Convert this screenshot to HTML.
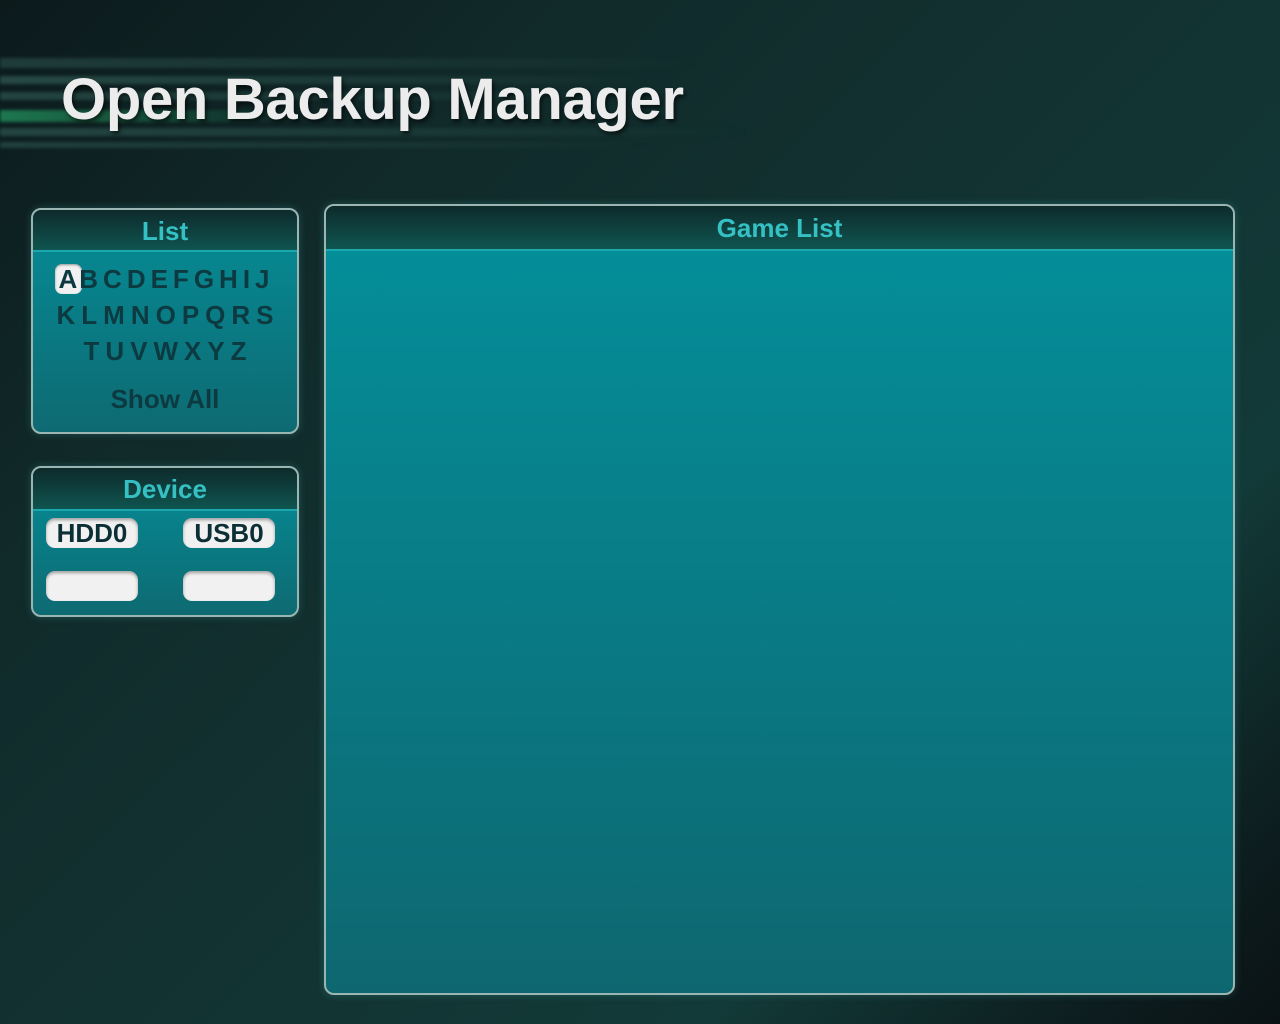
<!DOCTYPE html>
<html><head><style>
*{margin:0;padding:0;box-sizing:border-box}
body{width:1280px;height:1024px;overflow:hidden;position:relative;font-family:"Liberation Sans",sans-serif;
background:linear-gradient(135deg,#0c1a1c 0%,#112a2a 25%,#123433 55%,#123a38 75%,#0d1c1e 92%,#0a1214 100%);}
.stripe{position:absolute;left:0;height:8px;filter:blur(1.5px)}
.title{position:absolute;left:61px;top:66px;font-size:58px;font-weight:bold;color:#ececec;letter-spacing:-0.3px;text-shadow:2px 3px 4px rgba(0,0,0,.6);}
.panel{position:absolute;border:2px solid #9bb5b3;border-radius:10px;overflow:hidden;
background:linear-gradient(#058d97,#0e6a72);box-shadow:0 0 8px rgba(80,200,200,.25);}
.hd{background:linear-gradient(#0e2a2b,#0f5550);border-bottom:2px solid #1aa7ad;color:#35c0c4;font-weight:bold;text-align:center;font-size:26px;}
.row{position:absolute;left:0;width:100%;text-align:center;font-weight:bold;font-size:26px;color:#0c3a40;letter-spacing:6px;}
.btn{position:absolute;width:92px;height:30px;background:#f1f1f1;border-radius:9px;box-shadow:inset 0 2px 3px rgba(0,0,0,.35);color:#0c2f35;font-weight:bold;font-size:26px;text-align:center;line-height:30px;}
</style></head><body>
<div class="stripe" style="top:58px;width:700px;height:10px;background:linear-gradient(90deg,rgba(60,110,100,.4),rgba(60,110,100,0))"></div>
<div class="stripe" style="top:76px;width:650px;background:linear-gradient(90deg,rgba(70,130,115,.45),rgba(70,130,115,0))"></div>
<div class="stripe" style="top:92px;width:620px;background:linear-gradient(90deg,rgba(70,130,115,.4),rgba(70,130,115,0))"></div>
<div class="stripe" style="top:110px;width:300px;height:12px;background:linear-gradient(90deg,rgba(40,180,110,.6),rgba(40,160,110,0))"></div>
<div class="stripe" style="top:128px;width:750px;background:linear-gradient(90deg,rgba(70,130,115,.4),rgba(70,130,115,0))"></div>
<div class="stripe" style="top:142px;width:650px;height:6px;background:linear-gradient(90deg,rgba(70,130,115,.35),rgba(70,130,115,0))"></div>
<div class="title">Open Backup Manager</div>

<div class="panel" style="left:31px;top:208px;width:268px;height:226px">
 <div class="hd" style="height:42px;line-height:42px">List</div>
 <div class="row" style="top:54px;left:0px;letter-spacing:5px"><span style="background:#f1f1f1;border-radius:7px;padding:0 0 0 3px;margin-right:-3px;box-shadow:inset 0 1px 2px rgba(0,0,0,.4)">A</span>BCDEFGHIJ</div>
 <div class="row" style="top:90px;left:3px">KLMNOPQRS</div>
 <div class="row" style="top:126px;left:3px">TUVWXYZ</div>
 <div class="row" style="top:174px;letter-spacing:0">Show All</div>
</div>

<div class="panel" style="left:31px;top:466px;width:268px;height:151px">
 <div class="hd" style="height:43px;line-height:43px">Device</div>
 <div class="btn" style="left:13px;top:50px">HDD0</div>
 <div class="btn" style="left:150px;top:50px">USB0</div>
 <div class="btn" style="left:13px;top:103px"></div>
 <div class="btn" style="left:150px;top:103px"></div>
</div>

<div class="panel" style="left:324px;top:204px;width:911px;height:791px;background:linear-gradient(#048e99 5%,#0e6770)">
 <div class="hd" style="height:45px;line-height:45px">Game List</div>
</div>
</body></html>
